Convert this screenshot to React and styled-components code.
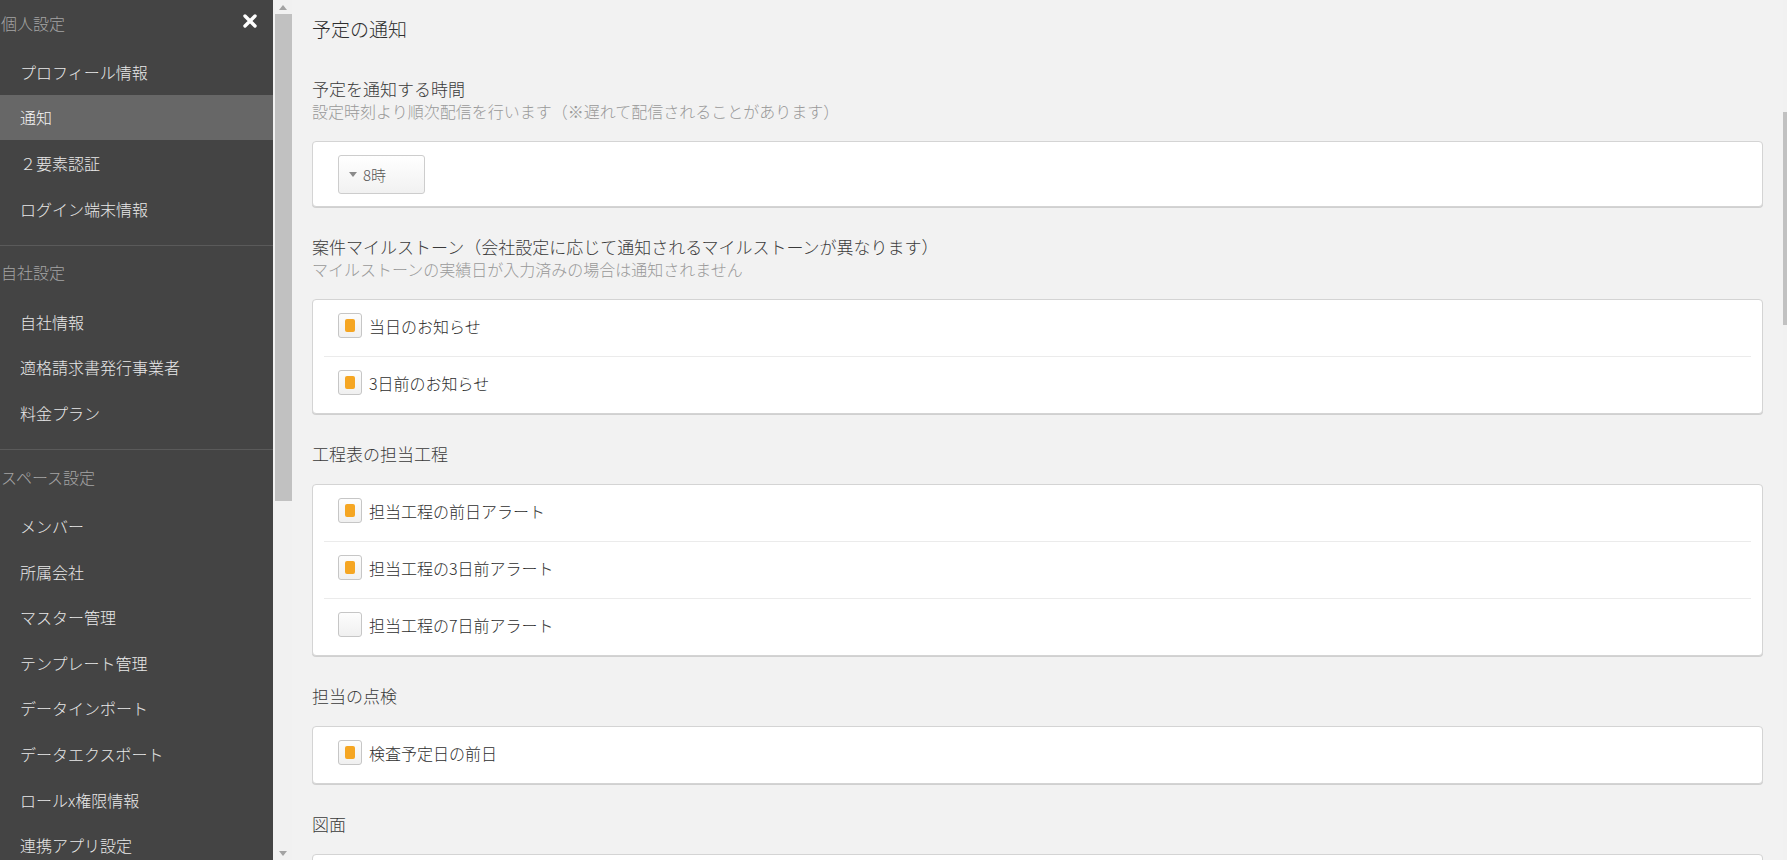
import React from 'react'
import styled, { createGlobalStyle } from 'styled-components'

const GlobalStyle = createGlobalStyle`
  html, body {
    margin: 0;
    padding: 0;
    height: 100%;
    overflow: hidden;
  }
  body {
    font-family: "Noto Sans CJK JP", "Noto Sans", sans-serif;
    font-weight: 300;
    background: #f2f2f2;
  }
  #root {
    height: 100%;
  }
`

const groups = [
  {
    title: '個人設定',
    close: true,
    items: ['プロフィール情報', '通知', '２要素認証', 'ログイン端末情報'],
  },
  {
    title: '自社設定',
    items: ['自社情報', '適格請求書発行事業者', '料金プラン'],
  },
  {
    title: 'スペース設定',
    items: [
      'メンバー',
      '所属会社',
      'マスター管理',
      'テンプレート管理',
      'データインポート',
      'データエクスポート',
      'ロールx権限情報',
      '連携アプリ設定',
    ],
  },
]

const sections = [
  {
    title: '予定を通知する時間',
    sub: '設定時刻より順次配信を行います（※遅れて配信されることがあります）',
    select: '8時',
  },
  {
    title: '案件マイルストーン（会社設定に応じて通知されるマイルストーンが異なります）',
    sub: 'マイルストーンの実績日が入力済みの場合は通知されません',
    rows: [
      { label: '当日のお知らせ', checked: true },
      { label: '3日前のお知らせ', checked: true },
    ],
  },
  {
    title: '工程表の担当工程',
    rows: [
      { label: '担当工程の前日アラート', checked: true },
      { label: '担当工程の3日前アラート', checked: true },
      { label: '担当工程の7日前アラート', checked: false },
    ],
  },
  {
    title: '担当の点検',
    rows: [{ label: '検査予定日の前日', checked: true }],
  },
  {
    title: '図面',
    rows: [{ label: '', checked: false, empty: true }],
  },
]

const Arrow = ({ down }) => (
  <svg width="8" height="5" viewBox="0 0 8 5">
    <path d={down ? 'M0 0 L8 0 L4 5 Z' : 'M0 5 L8 5 L4 0 Z'} fill="#a3a3a3" />
  </svg>
)

const CloseIcon = () => (
  <svg width="16" height="16" viewBox="0 0 16 16">
    <path d="M3 3 L13 13 M13 3 L3 13" stroke="#fff" strokeWidth="3.4" strokeLinecap="round" />
  </svg>
)

const App = () => {
  return (
    <Page>
      <GlobalStyle />
      <Sidebar>
        {groups.map((g, gi) => (
          <Group key={g.title} $first={gi === 0}>
            <GroupHeader>
              <span>{g.title}</span>
              {g.close && (
                <CloseButton>
                  <CloseIcon />
                </CloseButton>
              )}
            </GroupHeader>
            {g.items.map((item) => (
              <NavItem key={item} $active={item === '通知'}>
                {item}
              </NavItem>
            ))}
          </Group>
        ))}
      </Sidebar>

      <SideScroll>
        <ScrollArrow>
          <Arrow />
        </ScrollArrow>
        <SideThumb />
        <Spacer />
        <ScrollArrow>
          <Arrow down />
        </ScrollArrow>
      </SideScroll>

      <Main>
        <PageTitle>予定の通知</PageTitle>
        {sections.map((s, si) => (
          <Section key={s.title} $first={si === 0}>
            <SectionHead>
              <Heading>{s.title}</Heading>
              {s.sub && <Sub>{s.sub}</Sub>}
            </SectionHead>
            {s.select ? (
              <Card $pad>
                <SelectBox>
                  <svg width="8" height="5" viewBox="0 0 8 5">
                    <path d="M0 0 L8 0 L4 5 Z" fill="#8a8a8a" />
                  </svg>
                  <span>{s.select}</span>
                </SelectBox>
              </Card>
            ) : (
              <Card>
                {s.rows.map((r, ri) => (
                  <Row key={ri}>
                    {!r.empty && (
                      <>
                        <Check>{r.checked && <CheckMark />}</Check>
                        <span>{r.label}</span>
                      </>
                    )}
                  </Row>
                ))}
              </Card>
            )}
          </Section>
        ))}
      </Main>

      <PageScroll>
        <PageThumb />
      </PageScroll>
    </Page>
  )
}

export default App

const Page = styled.div`
  display: flex;
  width: 100%;
  height: 100vh;
  overflow: hidden;
  background: #f2f2f2;
`
const Sidebar = styled.nav`
  width: 273px;
  flex: none;
  background: #444444;
  overflow: hidden;
`
const Group = styled.div`
  margin-top: ${(p) => (p.$first ? '-4px' : '0')};
  padding-bottom: 13.5px;
  border-bottom: 1px solid #5a5a5a;
`
const GroupHeader = styled.div`
  height: 53px;
  display: flex;
  align-items: center;
  justify-content: space-between;
  padding: 0 15px 0 1px;
  font-size: 16px;
  color: #a4a4a4;
`
const CloseButton = styled.div`
  display: flex;
  align-items: center;
  margin-top: -4px;
`
const NavItem = styled.div`
  height: 45.6px;
  display: flex;
  align-items: center;
  padding-left: 20px;
  font-size: 16px;
  color: ${(p) => (p.$active ? '#f4f4f4' : '#e8e8e8')};
  background: ${(p) => (p.$active ? '#676767' : 'transparent')};
`
const SideScroll = styled.div`
  width: 19px;
  flex: none;
  display: flex;
  flex-direction: column;
  align-items: center;
  background: #f1f1f1;
`
const ScrollArrow = styled.div`
  height: 14px;
  width: 100%;
  display: flex;
  align-items: center;
  justify-content: center;
`
const SideThumb = styled.div`
  width: 17px;
  height: 487px;
  margin-left: 1px;
  background: #c1c1c1;
`
const Spacer = styled.div`
  flex: 1;
`
const Main = styled.main`
  flex: 1;
  min-width: 0;
  padding: 0 20px;
  overflow: hidden;
`
const PageTitle = styled.h1`
  margin: 16px 0 0;
  font-size: 19px;
  line-height: 26px;
  font-weight: 300;
  color: #2e2e2e;
`
const Section = styled.section`
  margin-top: ${(p) => (p.$first ? '36px' : '29px')};
`
const SectionHead = styled.div`
  margin-bottom: 19px;
`
const Heading = styled.div`
  font-size: 17px;
  line-height: 22px;
  color: #3a3a3a;
`
const Sub = styled.div`
  font-size: 16px;
  line-height: 22px;
  color: #999;
`
const Card = styled.div`
  background: #fff;
  border: 1px solid #d4d4d4;
  border-radius: 4px;
  box-shadow: 0 1px 0 #d0d0d0;
  padding: ${(p) => (p.$pad ? '13px 11px 12px' : '0 11px')};
`
const SelectBox = styled.div`
  margin-left: 14px;
  width: 87px;
  height: 39px;
  box-sizing: border-box;
  display: flex;
  align-items: center;
  gap: 6px;
  padding-left: 10px;
  border: 1px solid #cdcdcd;
  border-radius: 3px;
  background: linear-gradient(#ffffff, #f1f1f1);
  font-size: 15px;
  color: #555;
`
const Row = styled.div`
  height: 56px;
  box-sizing: border-box;
  display: flex;
  align-items: center;
  gap: 7px;
  padding: 0 0 5px 14px;
  font-size: 16px;
  color: #2e2e2e;

  & + & {
    height: 57px;
    border-top: 1px solid #ebebeb;
  }
`
const Check = styled.span`
  width: 24px;
  height: 25px;
  box-sizing: border-box;
  flex: none;
  display: flex;
  align-items: center;
  justify-content: center;
  border: 1px solid #c6c6c6;
  border-radius: 3px;
  background: linear-gradient(#fdfdfd, #f0f0f0);
`
const CheckMark = styled.span`
  width: 10px;
  height: 13px;
  border-radius: 2px;
  background: #f5a623;
`
const PageScroll = styled.div`
  width: 4px;
  flex: none;
  background: #f1f1f1;
`
const PageThumb = styled.div`
  margin-top: 112px;
  height: 213px;
  background: #c1c1c1;
`
